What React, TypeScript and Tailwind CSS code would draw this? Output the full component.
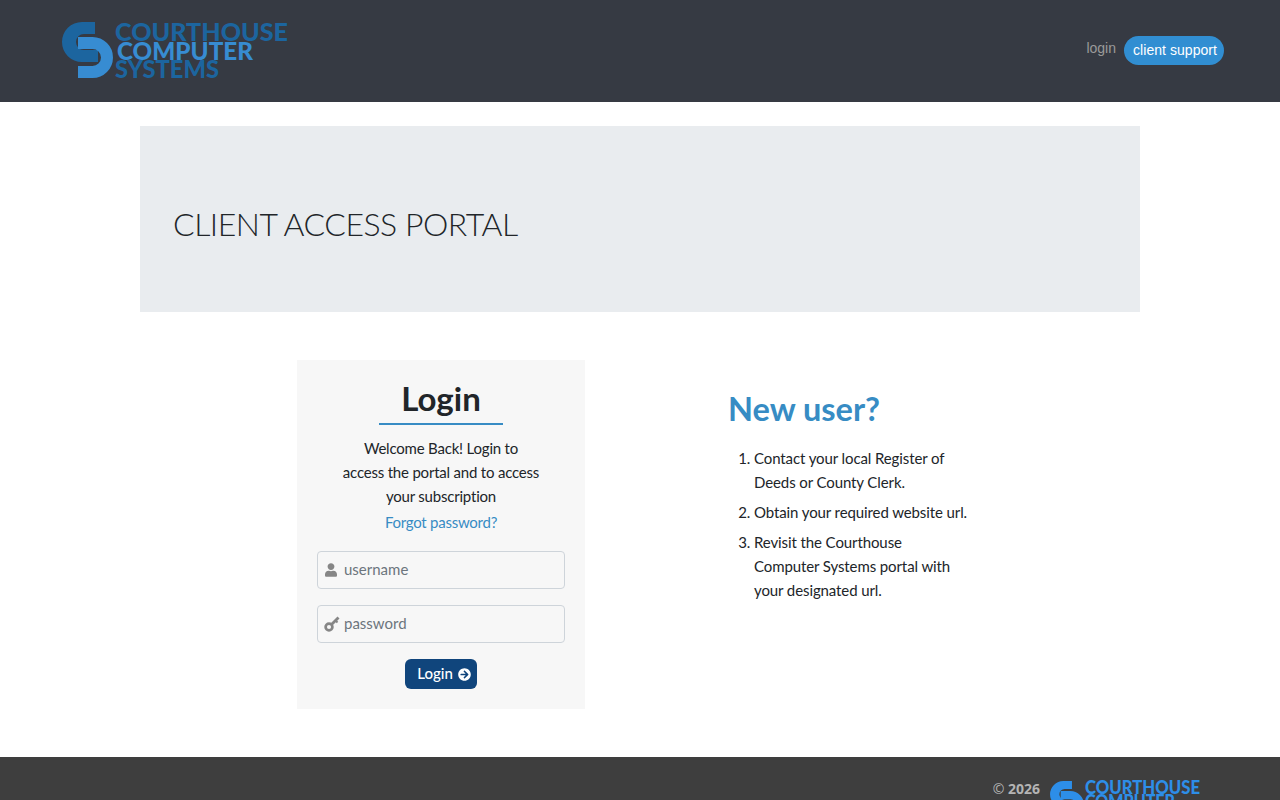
import { FaUser, FaArrowCircleRight } from "react-icons/fa";

const gill = "font-['Lato','Noto_Sans',sans-serif]";

function LogoMark({ dark, light }: { dark: string; light: string }) {
  return (
    <>
      <path d="M95 22H82A20 20 0 0 0 82 62H98V50H84A8 8 0 0 1 84 34H95Z" fill={dark} />
      <path d="M78 43H92.500A14.500 14.500 0 0 1 92.500 72H78" fill="none" stroke={light} strokeWidth="12" />
    </>
  );
}

function HeaderLogo() {
  return (
    <svg width="240" height="70" viewBox="56 16 240 70" className="block">
      <LogoMark dark="#1c659f" light="#378cd2" />
      <g fontFamily="Lato, sans-serif" fontWeight="900" fontSize="24">
        <text x="115" y="41" textLength="173" lengthAdjust="spacingAndGlyphs" fill="#1c659f">COURTHOUSE</text>
        <text x="115" y="78" textLength="104" lengthAdjust="spacingAndGlyphs" fill="#1c659f">SYSTEMS</text>
        <text x="117" y="60" textLength="136" lengthAdjust="spacingAndGlyphs" fill="#378cd2">COMPUTER</text>
      </g>
    </svg>
  );
}

function FooterLogo() {
  return (
    <svg width="152" height="40" viewBox="0 0 152 40" className="block">
      <g transform="translate(-40.200 -12.600) scale(0.665)">
        <LogoMark dark="#2d8ee8" light="#2d8ee8" />
      </g>
      <g fontFamily="Lato, sans-serif" fontWeight="900" fontSize="18" fill="#2d8ee8">
        <text x="36" y="15" textLength="115" lengthAdjust="spacingAndGlyphs">COURTHOUSE</text>
        <text x="36" y="29" textLength="90" lengthAdjust="spacingAndGlyphs">COMPUTER</text>
      </g>
    </svg>
  );
}

function KeyIcon() {
  return (
    <svg width="16" height="16" viewBox="0 0 16 16" className="block text-[#868686]" fill="none" stroke="currentColor">
      <circle cx="5" cy="11" r="3.400" strokeWidth="2.700" />
      <path d="M7.500 8.500L14.500 1.500" strokeWidth="2.800" />
      <path d="M11.500 4.500L13.500 6.500" strokeWidth="2" />
    </svg>
  );
}

export default function App() {
  return (
    <div className={`min-h-screen bg-white ${gill}`}>
      <header className="h-[102px] bg-[#363a43] flex items-center justify-between pl-[56px] pr-[56px]">
        <HeaderLogo />
        <nav className="flex items-center gap-[8px] font-['Liberation_Sans',sans-serif] text-[14px] -mt-[2px]">
          <a className="text-[#9a9a9a] -mt-[3px]">login</a>
          <a className="h-[29px] pl-[9px] pr-[7px] rounded-full bg-[#318ed2] text-white flex items-center tracking-[0.05px]">client support</a>
        </nav>
      </header>

      <div className="w-[1000px] mx-auto mt-[24px] h-[186px] bg-[#e9ecef] flex items-center px-[33px]">
        <h1 className="text-[32px] font-light text-[#212529] leading-none mt-[10px] tracking-[-0.5px]">CLIENT ACCESS PORTAL</h1>
      </div>

      <main className="flex mt-[48px] pl-[297px]">
        <section className="w-[288px] h-[349px] bg-[#f7f7f7] flex flex-col items-center px-[20px] text-[#212529]">
          <h2 className="mt-[18px] w-[124px] h-[47px] border-b-2 border-[#378cc4] text-center text-[33px] leading-[40px] font-bold">Login</h2>
          <p className="mt-[11px] text-center text-[15px] tracking-[-0.2px] leading-[24px]">
            Welcome Back! Login to<br />access the portal and to access<br />your subscription
          </p>
          <a className="mt-[2px] text-[15px] tracking-[-0.25px] leading-[24px] text-[#378cc4]">Forgot password?</a>
          <div className="mt-[17px] w-[248px] h-[38px] rounded-[4px] border border-[#ced4da] flex items-center gap-[6px] pl-[6px]">
            <FaUser className="w-[12px] h-[14px] text-[#868686] ml-[1px] mr-[1px]" />
            <span className="text-[15px] text-[#6c757d] -mt-[1px]">username</span>
          </div>
          <div className="mt-[16px] w-[248px] h-[38px] rounded-[4px] border border-[#ced4da] flex items-center gap-[4px] pl-[6px]">
            <KeyIcon />
            <span className="text-[15px] text-[#6c757d] -mt-[1px]">password</span>
          </div>
          <button className="mt-[16px] w-[72px] h-[30px] pl-[6px] rounded-[6px] bg-[#10457c] text-white text-[15px] font-medium flex items-center justify-center gap-[5px]">
            <span className="-mt-[1px]">Login</span> <FaArrowCircleRight className="w-[13px] h-[13px]" />
          </button>
        </section>

        <section className="ml-[143px] w-[260px] text-[#212529]">
          <h2 className="mt-[28px] text-[32.500px] leading-[42px] font-bold text-[#378cc4]">New user?</h2>
          <ol className="mt-[16px] list-decimal pl-[26px] text-[15px] tracking-[-0.1px] leading-[24px] flex flex-col gap-[6px]">
            <li>Contact your local Register of<br />Deeds or County Clerk.</li>
            <li>Obtain your required website url.</li>
            <li>Revisit the Courthouse<br />Computer Systems portal with<br />your designated url.</li>
          </ol>
        </section>
      </main>

      <footer className="mt-[48px] h-[70px] bg-[#3e3e3e] flex justify-end pr-[79px] pt-[22px] overflow-hidden">
        <span className="font-['Open_Sans',sans-serif] text-[14px] leading-[20px] font-bold text-[#b4b4b4] mr-[9px]"><span className="font-normal">©</span> 2026</span>
        <FooterLogo />
      </footer>
    </div>
  );
}
